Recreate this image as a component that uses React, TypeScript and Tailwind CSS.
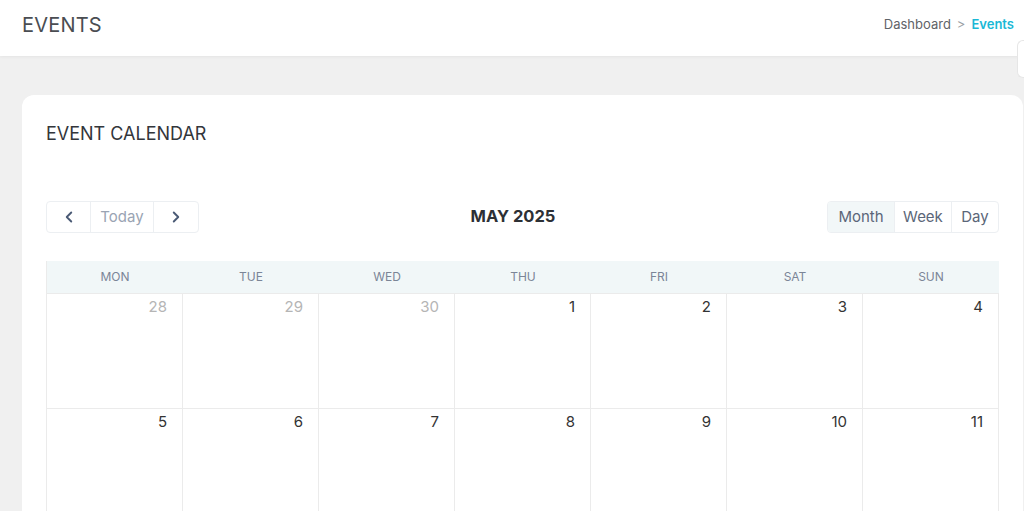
import { ChevronLeft, ChevronRight } from "lucide-react";

type Day = { n: number; muted?: boolean };

const weekDays = ["MON", "TUE", "WED", "THU", "FRI", "SAT", "SUN"];

const weeks: Day[][] = [
  [{ n: 28, muted: true }, { n: 29, muted: true }, { n: 30, muted: true }, { n: 1 }, { n: 2 }, { n: 3 }, { n: 4 }],
  [{ n: 5 }, { n: 6 }, { n: 7 }, { n: 8 }, { n: 9 }, { n: 10 }, { n: 11 }],
];

export default function App() {
  return (
    <div
      className="relative h-screen overflow-hidden bg-[#f0f0f0]"
      style={{ fontFamily: "Inter, 'Noto Sans', sans-serif" }}
    >
      <header className="flex h-[56px] items-center justify-between bg-white pb-[7px] pl-[22px] pr-[10px] shadow-[0_1px_3px_rgba(0,0,0,0.05)]">
        <h1 className="text-[20px] font-normal tracking-[0.2px] text-[#4a4d52]">EVENTS</h1>
        <nav className="flex items-center gap-[6px] text-[13px]">
          <span className="text-[#5f6368]">Dashboard</span>
          <span className="text-[#9aa0a6]">&gt;</span>
          <span className="font-semibold text-[#1ab8d6]">Events</span>
        </nav>
      </header>

      <div className="absolute right-0 top-[40px] h-[38px] w-[7px] rounded-l-md border border-r-0 border-[#e6e6e6] bg-white" />

      <main className="ml-[22px] mr-[1px] mt-[39px] rounded-[12px] bg-white px-[24px] pt-[25px]">
        <h2 className="text-[18px] font-normal leading-[28px] text-[#33363b]">EVENT CALENDAR</h2>

        <div className="mt-[53px] flex items-center justify-between">
          <div className="flex h-[32px] rounded-[4px] border border-[#eceff2] text-[15px]">
            <button className="flex w-[44px] items-center justify-center border-r border-[#eceff2] text-[#4a5a75]">
              <ChevronLeft size={18} strokeWidth={2.5} />
            </button>
            <button className="w-[63px] border-r border-[#eceff2] text-[#9aa4b3]">Today</button>
            <button className="flex w-[44px] items-center justify-center text-[#4a5a75]">
              <ChevronRight size={18} strokeWidth={2.5} />
            </button>
          </div>
          <div className="-mt-[2px] text-[16.5px] font-bold text-[#2d3035]">MAY 2025</div>
          <div className="flex h-[32px] overflow-hidden rounded-[4px] border border-[#eceff2] text-[15px] text-[#5b6678]">
            <button className="w-[66px] bg-[#f2f7f8]">Month</button>
            <button className="w-[57px] border-l border-[#eceff2]">Week</button>
            <button className="w-[47px] border-l border-[#eceff2]">Day</button>
          </div>
        </div>

        <div className="mt-[28px] border-l border-[#ebebeb]">
          <div className="grid h-[32px] grid-cols-7 bg-[#f1f7f8]">
            {weekDays.map((d) => (
              <div key={d} className="flex items-center justify-center text-[12px] text-[#7b8597]">
                {d}
              </div>
            ))}
          </div>
          {weeks.map((w, i) => (
            <div key={i} className="grid h-[115px] grid-cols-7 border-t border-[#ebebeb]">
              {w.map((d) => (
                <div key={d.n} className="border-r border-[#ebebeb] px-[15px] text-right leading-[24px]">
                  <span className={`text-[15px] ${d.muted ? "text-[#b5b5b5]" : "text-[#333333]"}`}>{d.n}</span>
                </div>
              ))}
            </div>
          ))}
        </div>
      </main>
    </div>
  );
}
